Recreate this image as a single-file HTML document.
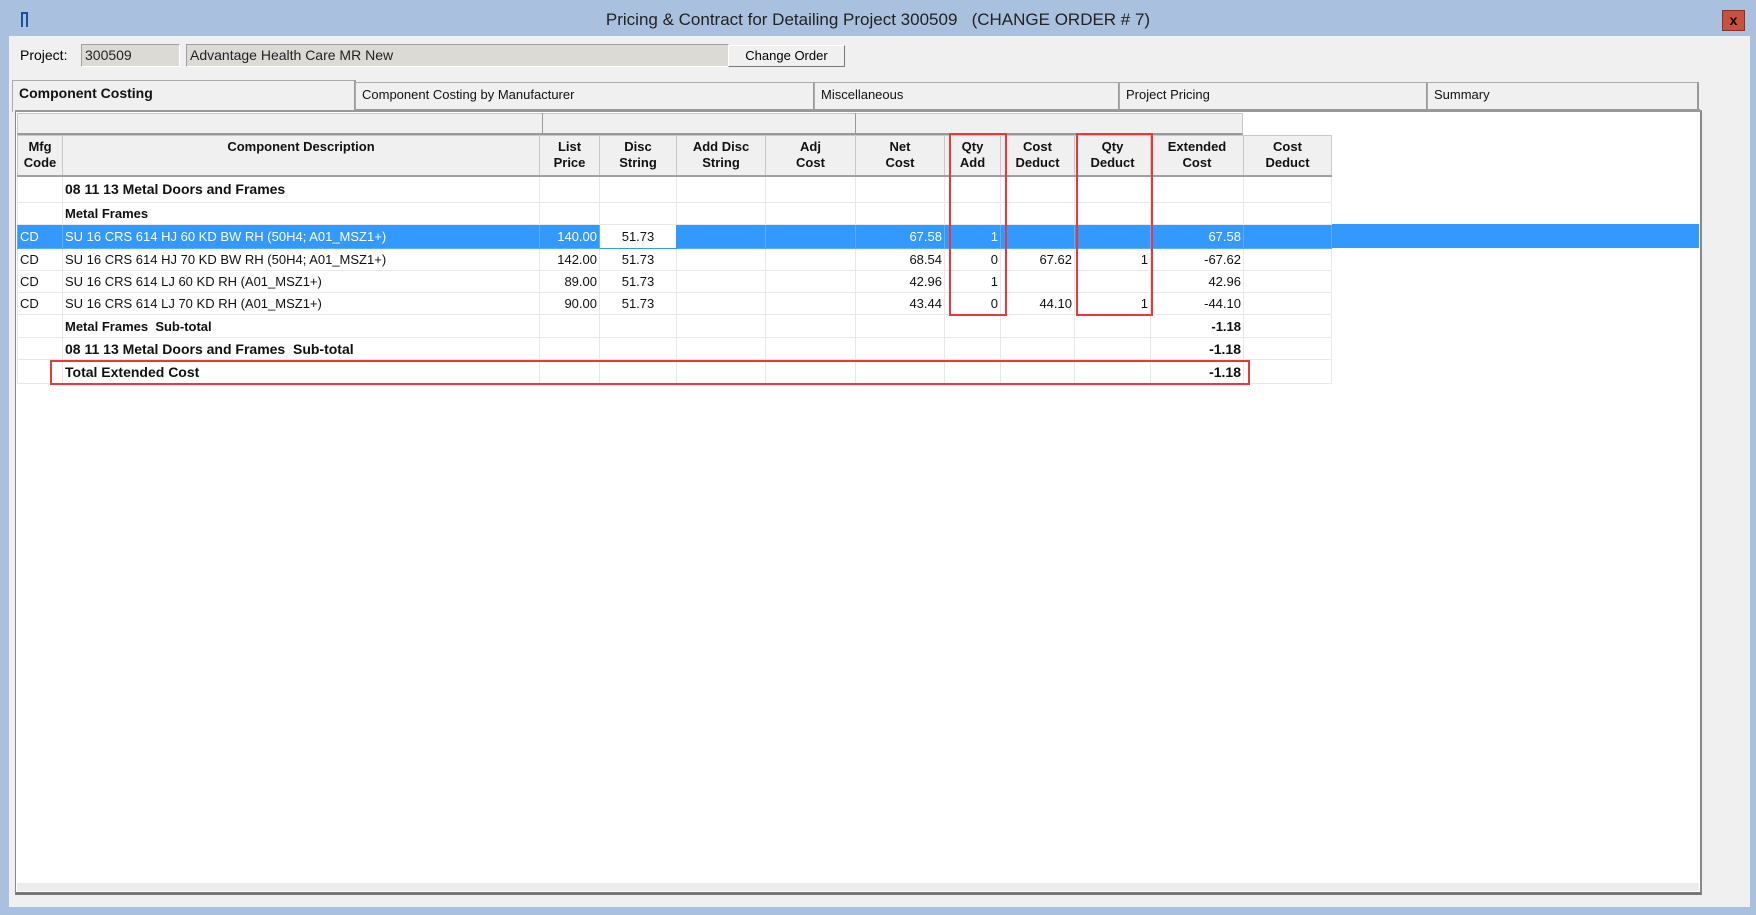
<!DOCTYPE html>
<html><head><meta charset="utf-8"><style>
*{box-sizing:border-box;margin:0;padding:0}
body{width:1756px;height:915px;background:#a9c1de;font-family:"Liberation Sans",Arial,sans-serif;position:relative;overflow:hidden}
.abs{position:absolute}
.win{left:9px;top:36px;width:1741px;height:871px;background:#f0f0f0}
.title{left:0;top:0;width:1756px;height:36px;text-align:center;font-size:17px;line-height:40px;color:#222}
.close{left:1722px;top:10px;width:23px;height:21px;background:#c9503f;border:1px solid #8a3020;color:#000;font-weight:bold;font-size:14px;text-align:center;line-height:19px}
.inp{background:#dcdad5;border:1px solid #a0a0a0;border-bottom-color:#fff;border-right-color:#fff;font-size:14px;line-height:20px;padding-left:3px;color:#222}
.btn{background:#f0f0f0;border:1px solid #777;border-top-color:#fff;border-left-color:#fff;font-size:13px;text-align:center;line-height:20px}
.tab{top:82px;height:28px;border:1px solid #aaa;border-bottom:none;border-right:2px solid #999;font-size:13px;line-height:24px;padding-left:6px;background:#f0f0f0;color:#111}
table{border-collapse:collapse;table-layout:fixed;font-size:13px}
td{border:1px solid #e8e8e8;white-space:nowrap;overflow:hidden;padding:0 2px;color:#111}
th{background:#f0f0f0;border:1px solid #c8c8c8;border-bottom:2px solid #a0a0a0;font-weight:bold;font-size:13px;line-height:16px;color:#111}
.r{text-align:right}.c{text-align:center}.b{font-weight:bold}
tr.sel td{background:#3399ff;color:#fff;border-color:#5aaeff}
.red{border:2px solid #e8383d;position:absolute}
</style></head><body>
<div class="abs title">Pricing &amp; Contract for Detailing Project 300509&nbsp;&nbsp;&nbsp;(CHANGE ORDER # 7)</div>
<div class="abs" style="left:21px;top:12px;width:7px;height:15px;border:2px solid #1a4f9e;border-bottom:none"></div>
<div class="abs close">x</div>
<div class="abs win"></div>
<div class="abs" style="left:20px;top:47px;font-size:14px">Project:</div>
<div class="abs inp" style="left:81px;top:44px;width:99px;height:23px">300509</div>
<div class="abs inp" style="left:186px;top:44px;width:543px;height:23px">Advantage Health Care MR New</div>
<div class="abs btn" style="left:728px;top:45px;width:117px;height:22px">Change Order</div>
<div class="abs tab" style="left:12px;top:80px;height:32px;width:344px;font-weight:bold;font-size:14px;border-bottom:none">Component Costing</div>
<div class="abs tab" style="left:355px;width:460px">Component Costing by Manufacturer</div>
<div class="abs tab" style="left:814px;width:306px">Miscellaneous</div>
<div class="abs tab" style="left:1119px;width:309px">Project Pricing</div>
<div class="abs tab" style="left:1427px;width:272px">Summary</div>
<div class="abs" style="left:15px;top:110px;width:1687px;height:785px;background:#fff;border:1px solid #888;border-top:2px solid #999;border-right:2px solid #888;border-bottom:3px solid #777"></div>
<div class="abs" style="left:356px;top:109px;width:1344px;height:3px;background:#999"></div>
<div class="abs" style="left:17px;top:883px;width:1682px;height:8px;background:#ececec"></div>
<div class="abs" style="left:17px;top:113px;width:1226px;height:22px;background:#f0f0f0;border:1px solid #c8c8c8;border-bottom:2px solid #999"></div>
<div class="abs" style="left:542px;top:113px;width:1px;height:22px;background:#999"></div>
<div class="abs" style="left:855px;top:113px;width:1px;height:22px;background:#999"></div>
<div class="abs" style="left:1331px;top:224px;width:368px;height:24px;background:#3399ff"></div>
<table class="abs" style="left:17px;top:135px;width:1314px">
<colgroup><col style="width:45px"><col style="width:477px"><col style="width:60px"><col style="width:77px"><col style="width:89px"><col style="width:90px"><col style="width:89px"><col style="width:56px"><col style="width:74px"><col style="width:76px"><col style="width:93px"><col style="width:88px"></colgroup>
<tr style="height:40px"><th>Mfg<br>Code</th><th style="vertical-align:top;padding-top:3px">Component Description</th><th>List<br>Price</th><th>Disc<br>String</th><th>Add Disc<br>String</th><th>Adj<br>Cost</th><th>Net<br>Cost</th><th>Qty<br>Add</th><th>Cost<br>Deduct</th><th>Qty<br>Deduct</th><th>Extended<br>Cost</th><th>Cost<br>Deduct</th></tr>
<tr style="height:27px"><td></td><td class="b" style="font-size:14px">08 11 13 Metal Doors and Frames</td><td></td><td></td><td></td><td></td><td></td><td></td><td></td><td></td><td></td><td></td></tr>
<tr style="height:22px"><td></td><td class="b">Metal Frames</td><td></td><td></td><td></td><td></td><td></td><td></td><td></td><td></td><td></td><td></td></tr>
<tr class="sel" style="height:24px"><td>CD</td><td>SU 16 CRS 614 HJ 60 KD BW RH (50H4; A01_MSZ1+)</td><td class="r">140.00</td><td class="c" style="background:#fff;color:#111;border:1px solid #3399ff">51.73</td><td></td><td></td><td class="r">67.58</td><td class="r">1</td><td></td><td></td><td class="r">67.58</td><td></td></tr>
<tr style="height:22px"><td>CD</td><td>SU 16 CRS 614 HJ 70 KD BW RH (50H4; A01_MSZ1+)</td><td class="r">142.00</td><td class="c">51.73</td><td></td><td></td><td class="r">68.54</td><td class="r">0</td><td class="r">67.62</td><td class="r">1</td><td class="r">-67.62</td><td></td></tr>
<tr style="height:22px"><td>CD</td><td>SU 16 CRS 614 LJ 60 KD RH (A01_MSZ1+)</td><td class="r">89.00</td><td class="c">51.73</td><td></td><td></td><td class="r">42.96</td><td class="r">1</td><td></td><td></td><td class="r">42.96</td><td></td></tr>
<tr style="height:22px"><td>CD</td><td>SU 16 CRS 614 LJ 70 KD RH (A01_MSZ1+)</td><td class="r">90.00</td><td class="c">51.73</td><td></td><td></td><td class="r">43.44</td><td class="r">0</td><td class="r">44.10</td><td class="r">1</td><td class="r">-44.10</td><td></td></tr>
<tr style="height:23px"><td></td><td class="b">Metal Frames&nbsp; Sub-total</td><td></td><td></td><td></td><td></td><td></td><td></td><td></td><td></td><td class="r b">-1.18</td><td></td></tr>
<tr style="height:22px"><td></td><td class="b" style="font-size:14px">08 11 13 Metal Doors and Frames&nbsp; Sub-total</td><td></td><td></td><td></td><td></td><td></td><td></td><td></td><td></td><td class="r b" style="font-size:14px">-1.18</td><td></td></tr>
<tr style="height:24px"><td></td><td class="b" style="font-size:14px">Total Extended Cost</td><td></td><td></td><td></td><td></td><td></td><td></td><td></td><td></td><td class="r b" style="font-size:14px">-1.18</td><td></td></tr>
</table>
<div class="red" style="left:949px;top:133px;width:58px;height:183px"></div>
<div class="red" style="left:1076px;top:133px;width:77px;height:183px"></div>
<div class="red" style="left:50px;top:360px;width:1200px;height:25px"></div>
</body></html>
